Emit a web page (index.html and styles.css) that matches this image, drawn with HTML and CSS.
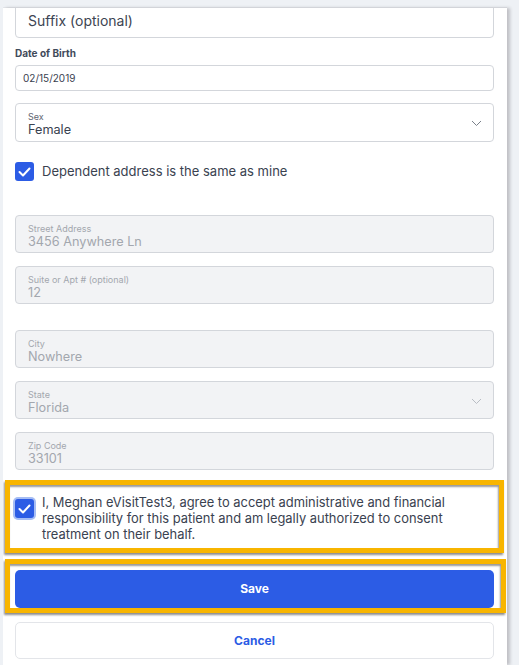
FILE: index.html
```html
<!DOCTYPE html>
<html lang="en">
<head>
    <meta charset="UTF-8">
    <meta name="viewport" content="width=device-width, initial-scale=1.0">
    <title>Add Dependent</title>
    <link rel="stylesheet" href="styles.css">
</head>
<body>
    <div class="panel">
        <div class="field field-suffix">
            <span class="placeholder">Suffix (optional)</span>
        </div>

        <div class="label">Date of Birth</div>
        <div class="field field-small">02/15/2019</div>

        <div class="field field-float field-sex">
            <span class="float-label">Sex</span>
            <span class="float-value">Female</span>
            <svg class="chevron" width="11" height="7" viewBox="0 0 11 7"><path d="M1 1l4.5 4.5L10 1" fill="none" stroke="#7a808a" stroke-width="1"/></svg>
        </div>

        <label class="check-row row-same">
            <span class="checkbox">
                <svg width="13" height="10" viewBox="0 0 13 10"><path d="M1.5 5l3.5 3.5 6.5-7" fill="none" stroke="#fff" stroke-width="2" stroke-linecap="round" stroke-linejoin="round"/></svg>
            </span>
            <span class="check-text">Dependent address is the same as mine</span>
        </label>

        <div class="field field-float disabled gap-lg">
            <span class="float-label">Street Address</span>
            <span class="float-value">3456 Anywhere Ln</span>
        </div>
        <div class="field field-float disabled gap-sm">
            <span class="float-label">Suite or Apt # (optional)</span>
            <span class="float-value">12</span>
        </div>
        <div class="field field-float disabled gap-md">
            <span class="float-label">City</span>
            <span class="float-value">Nowhere</span>
        </div>
        <div class="field field-float disabled gap-sm">
            <span class="float-label">State</span>
            <span class="float-value">Florida</span>
            <svg class="chevron" width="11" height="7" viewBox="0 0 11 7"><path d="M1 1l4.5 4.5L10 1" fill="none" stroke="#b9bdc4" stroke-width="1"/></svg>
        </div>
        <div class="field field-float disabled gap-sm">
            <span class="float-label">Zip Code</span>
            <span class="float-value">33101</span>
        </div>

        <div class="callout callout-consent">
            <label class="check-row consent">
                <span class="checkbox focused">
                    <svg width="13" height="10" viewBox="0 0 13 10"><path d="M1.5 5l3.5 3.5 6.5-7" fill="none" stroke="#fff" stroke-width="2" stroke-linecap="round" stroke-linejoin="round"/></svg>
                </span>
                <span class="consent-text">I, Meghan eVisitTest3, agree to accept administrative and financial responsibility for this patient and am legally authorized to consent treatment on their behalf.</span>
            </label>
        </div>

        <div class="callout callout-save">
            <button class="btn btn-primary">Save</button>
        </div>

        <button class="btn btn-secondary">Cancel</button>
    </div>
</body>
</html>
```

FILE: styles.css
```css
body {
    margin: 0;
    background: #eef1f5;
    font-family: Inter, "Noto Sans", Arial, sans-serif;
    color: #3a4250;
    overflow: hidden;
}
.panel {
    box-sizing: border-box;
    width: 504px;
    height: 657px;
    margin: 8px 0 0 3px;
    padding: 0 13px 0 12px;
    background: #fff;
    box-shadow: 3px 0 3px rgba(60, 50, 60, 0.25), 0 -1px 0 #e3e6ea;
    overflow: hidden;
    display: flex;
    flex-direction: column;
}
.field {
    box-sizing: border-box;
    position: relative;
    height: 38px;
    border: 1px solid #d3d6db;
    border-radius: 4px;
    background: #fff;
    flex-shrink: 0;
}
.field-suffix {
    margin-top: -8px;
    height: 38px;
    padding: 9px 0 0 12px;
}
.placeholder {
    font-size: 14px;
    line-height: 18px;
    color: #3c4452;
}
.label {
    margin-top: 9px;
    font-size: 10px;
    line-height: 12px;
    font-weight: 700;
    color: #3f4a5a;
}
.field-small {
    margin-top: 6px;
    height: 26px;
    padding: 0 7px;
    font-size: 10px;
    line-height: 24px;
    color: #3a4250;
}
.field-float {
    height: 39px;
    padding: 7px 0 0 12px;
    display: flex;
    flex-direction: column;
}
.field-sex {
    margin-top: 12px;
}
.float-label {
    font-size: 9px;
    line-height: 11px;
    color: #5f6672;
}
.float-value {
    font-size: 12.7px;
    line-height: 15px;
    color: #3a4250;
}
.chevron {
    position: absolute;
    right: 11px;
    top: 16px;
}
.disabled {
    background: #f2f3f5;
    height: 38px;
}
.disabled .float-label,
.disabled .float-value {
    color: #a3a7ae;
}
.gap-lg {
    margin-top: 34px;
}
.gap-md {
    margin-top: 26px;
}
.gap-sm {
    margin-top: 13px;
}
.check-row {
    display: flex;
    align-items: flex-start;
    gap: 8px;
}
.row-same {
    margin-top: 20px;
    align-items: center;
}
.checkbox {
    flex-shrink: 0;
    width: 19px;
    height: 19px;
    border-radius: 3px;
    background: #2c5ce5;
    display: flex;
    align-items: center;
    justify-content: center;
}
.checkbox.focused {
    margin-top: 4px;
    box-shadow: 0 0 0 2px #a6bdf4;
}
.check-text {
    font-size: 13px;
    line-height: 19px;
    color: #3a4250;
}
.callout {
    margin: 0 -10px;
    padding: 0 5px;
    border: 5px solid #f8b500;
    box-shadow: -1px 2px 2px rgba(0, 0, 0, 0.45), inset -1px 2px 2px rgba(0, 0, 0, 0.4);
    flex-shrink: 0;
}
.callout-consent {
    margin-top: 10px;
    padding-top: 10px;
    padding-bottom: 5px;
}
.consent-text {
    font-size: 12.9px;
    line-height: 16px;
    color: #3a4250;
}
.callout-save {
    margin-top: 6px;
    margin-right: -12px;
    padding-top: 6px;
}
.callout-save .btn {
    width: 479px;
}
.btn {
    box-sizing: border-box;
    display: block;
    width: 100%;
    height: 38px;
    border-radius: 5px;
    font-family: Inter, "Noto Sans", Arial, sans-serif;
    font-size: 12px;
    font-weight: 700;
    line-height: 36px;
    padding: 0;
    cursor: pointer;
}
.btn-primary {
    background: #2c5ce5;
    color: #fff;
    border: none;
}
.btn-secondary {
    margin-top: 9px;
    height: 37px;
    line-height: 31px;
    background: #fff;
    color: #2c5ce5;
    border: 1px solid #e3e5e9;
    flex-shrink: 0;
}
```
